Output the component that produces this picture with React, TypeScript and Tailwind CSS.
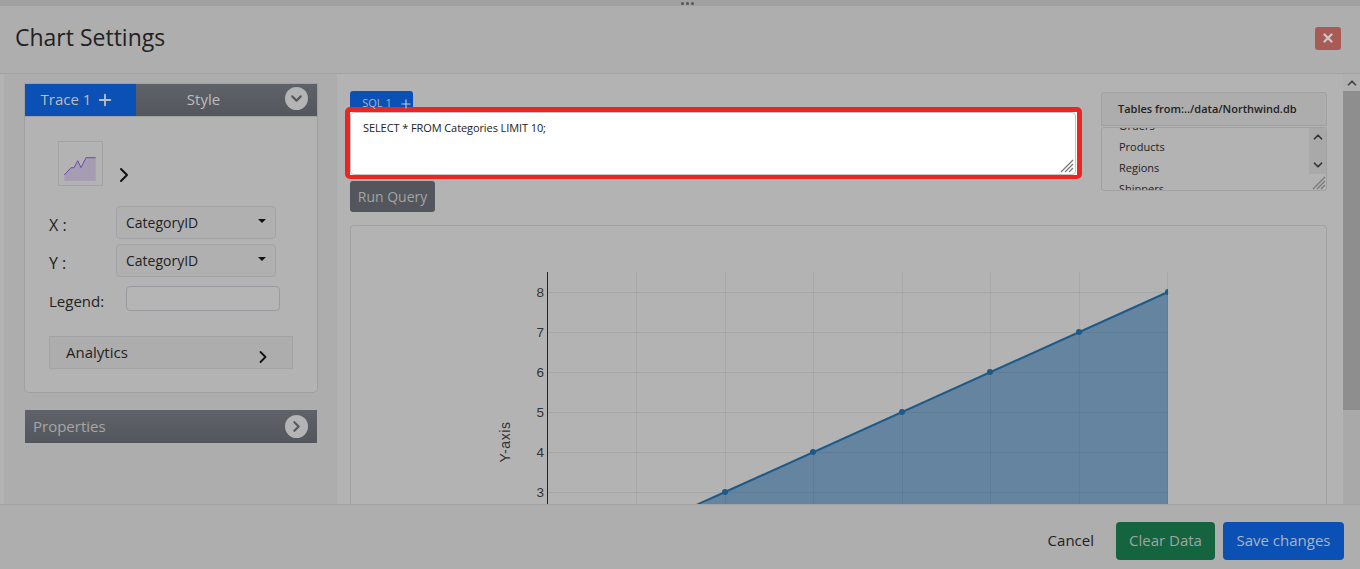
import { ChevronDown, ChevronRight, ChevronUp, Plus, X } from 'lucide-react'

const xGrid = [285, 374, 462, 551, 639, 728, 816]
const yTicks = [8, 7, 6, 5, 4, 3, 2]

function Grip() {
  return (
    <svg width="14" height="14" viewBox="0 0 14 14" className="block">
      <path d="M1 13 13 1M5 13 13 5M9 13 13 9" stroke="#777" strokeWidth="1.2" fill="none" />
    </svg>
  )
}

function RoundChevron({ down }: { down?: boolean }) {
  return (
    <span className="flex h-[23px] w-[23px] items-center justify-center rounded-full bg-[#b4b4b4] text-[#555a61]">
      {down ? <ChevronDown size={17} strokeWidth={3} /> : <ChevronRight size={17} strokeWidth={3} />}
    </span>
  )
}

function FieldSelect() {
  return (
    <div className="flex h-[33px] w-[160px] items-center justify-between rounded-[4px] border border-[#a3a3a6] bg-[#b0b0b0] pl-[9px] pr-[9px] text-[14px] text-[#222]">
      CategoryID
      <span className="mb-[3px] h-0 w-0 border-x-[4px] border-t-[4px] border-x-transparent border-t-[#111]" />
    </div>
  )
}

function Chart() {
  return (
    <svg width="975" height="300" viewBox="0 0 975 300" className="block">
      <path d="M374 266 817 66V300H308Z" fill="#65849f" />
      {xGrid.map((x) => (
        <line key={x} x1={x + 0.5} x2={x + 0.5} y1="46" y2="300" stroke="#000" strokeOpacity="0.06" />
      ))}
      {yTicks.map((t, i) => (
        <g key={t}>
          <line x1="197" x2="817" y1={66.5 + i * 40} y2={66.5 + i * 40} stroke="#000" strokeOpacity="0.06" />
          <text x="193" y={71 + i * 40} textAnchor="end" fontSize="13.5" fill="#333" fontFamily="Liberation Sans, sans-serif">
            {t}
          </text>
        </g>
      ))}
      <path d="M308 296 374 266 817 66" stroke="#1c5a8a" strokeWidth="2" fill="none" />
      {[374, 462, 551, 639, 728].map((x, i) => (
        <circle key={x} cx={x} cy={266 - i * 40} r="3" fill="#1c5a8a" />
      ))}
      <path d="M817 63a3 3 0 0 0 0 6Z" fill="#1c5a8a" />
      <line x1="196.5" x2="196.5" y1="46" y2="300" stroke="#222" />
      <text x="0" y="0" transform="translate(159 216) rotate(-90)" textAnchor="middle" fontSize="14" letterSpacing="0.6" fill="#333" fontFamily="Liberation Sans, sans-serif">
        Y-axis
      </text>
    </svg>
  )
}

export default function App() {
  return (
    <div className="flex h-[569px] w-[1360px] flex-col overflow-hidden bg-[#b3b3b3] font-['Open_Sans','Noto_Sans',sans-serif] text-[#222]">
      <div className="flex h-[6px] items-center justify-center gap-[2px] bg-[#a1a1a1] pl-[14px]">
        <span className="h-[3px] w-[3px] rounded-full bg-[#555]" />
        <span className="h-[3px] w-[3px] rounded-full bg-[#555]" />
        <span className="h-[3px] w-[3px] rounded-full bg-[#555]" />
      </div>

      <header className="flex h-[68px] shrink-0 items-center justify-between border-b border-[#a3a3a3] bg-[#aeaeae] pl-[15px] pr-[19px]">
        <h1 className="mb-[5px] text-[23px] leading-none text-[#222]">Chart Settings</h1>
        <button className="mb-[3px] flex h-[23px] w-[26px] items-center justify-center rounded-[3px] bg-[#a85a55] text-[#c9c9c9]">
          <X size={14} strokeWidth={4} />
        </button>
      </header>

      <div className="flex min-h-0 flex-1 overflow-hidden">
        <aside className="ml-[4px] w-[333px] shrink-0 bg-[#adadad] pl-[20px] pr-[19px] pt-[9px]">
          <div className="flex h-[34px] border border-[#a0a0a0] text-[15px] leading-[30px] text-[#bdbdbd]">
            <div className="flex w-[111px] items-center justify-center gap-[5px] bg-[#0b50b4] pb-[2px] pr-[6px]">
              Trace 1 <Plus size={18} strokeWidth={2.5} className="mt-[2px]" />
            </div>
            <div className="relative flex flex-1 items-center justify-center bg-gradient-to-b from-[#5f6369] to-[#53575d] pb-[2px] pr-[46px]">
              Style
              <div className="absolute right-[9px] top-[3px]">
                <RoundChevron down />
              </div>
            </div>
          </div>

          <div className="h-[276px] rounded-b-[5px] border border-t-0 border-[#a0a0a0] bg-[#b3b3b3] pl-[24px] pt-[24px]">
            <div className="flex items-end gap-[9px] pl-[9px]">
              <div className="flex h-[45px] w-[45px] items-center justify-center border border-[#a3a3a3]">
                <svg width="43" height="43" viewBox="0 0 43 43">
                  <path d="M5.3 33 12 25.7H15L18.7 18.7 22 25.7 27 15.7H36.7V39H5.3Z" fill="#a79db2" />
                  <path d="M5.3 33 12 25.7H15L18.7 18.7 22 25.7 27 15.7H36.7" stroke="#6a4bb0" strokeWidth="1" fill="none" />
                </svg>
              </div>
              <ChevronRight size={24} strokeWidth={2} className="mb-[-1px] text-[#111]" />
            </div>

            <div className="mt-[20px] flex items-center">
              <span className="mt-[4px] w-[67px] text-[16px]">X :</span>
              <FieldSelect />
            </div>
            <div className="mt-[5px] flex items-center">
              <span className="mt-[4px] w-[67px] text-[16px]">Y :</span>
              <FieldSelect />
            </div>
            <div className="mt-[9px] flex items-center">
              <span className="w-[77px] translate-y-[3px] text-[15px]">Legend:</span>
              <div className="h-[25px] w-[154px] rounded-[4px] border border-[#9a9aa0] bg-[#b5b5b5]" />
            </div>
            <div className="mt-[25px] flex h-[33px] w-[244px] items-center justify-between border border-[#a3a3a6] bg-[#adadad] pl-[16px] pr-[19px] text-[15px]">
              Analytics
              <ChevronRight size={20} strokeWidth={2.2} className="mt-[9px] text-[#111]" />
            </div>
          </div>

          <div className="mx-[1px] mt-[17px] flex h-[33px] items-center justify-between bg-gradient-to-b from-[#5f6369] to-[#53575d] pl-[8px] pr-[9px] text-[15px] text-[#a6a6a6]">
            Properties
            <RoundChevron />
          </div>
        </aside>

        <main className="flex min-w-0 flex-1 flex-col pl-[13px] pt-[17px] pr-[16px]">
          <div className="flex gap-[18px]">
            <div className="w-[733px]">
              <div className="flex h-[21px] w-[63px] items-start justify-center gap-[7px] rounded-t-[3px] bg-[#0b50b4] pl-[12px] pt-[4px] text-[11px] text-[#a9b6c6]">
                SQL 1 <Plus size={14} strokeWidth={2} className="mt-[2px] text-[#c0c8d4]" />
              </div>
              <div className="-mt-[5px] ml-[-5px] w-[737px] rounded-[5px] border-[5px] border-b-[4px] border-[#ec2520] bg-white pr-[1px]">
                <div className="relative h-[63px] rounded-[4px] border border-[#c4c4c4] pl-[12px] pt-[7px] text-[11px] tracking-[-0.09px] text-[#222]">
                  SELECT * FROM Categories LIMIT 10;
                  <div className="absolute bottom-[1px] right-[1px]">
                    <Grip />
                  </div>
                </div>
              </div>
              <button className="mt-[2px] h-[31px] w-[85px] rounded-[3px] bg-[#53575d] text-[14px] text-[#a3a3a3]">Run Query</button>
            </div>

            <div className="mt-[1px] w-[226px]">
              <div className="flex h-[34px] items-center rounded-t-[3px] border border-[#a1a1a4] bg-[#adadad] pl-[16px] text-[11px] font-semibold text-[#222]">
                Tables from:../data/Northwind.db
              </div>
              <div className="relative mt-[1px] h-[64px] overflow-hidden rounded-[3px] border border-[#a1a1a4] bg-[#b3b3b3] pl-[17px] text-[11px] leading-[21px] text-[#222]">
                <div className="-mt-[13px]">
                  <div>Orders</div>
                  <div>Products</div>
                  <div>Regions</div>
                  <div>Shippers</div>
                </div>
                <div className="absolute right-0 top-0 flex h-[46px] w-[17px] flex-col items-center justify-between bg-[#a9a9a9] py-[2px] text-[#333]">
                  <ChevronUp size={14} strokeWidth={3} />
                  <ChevronDown size={14} strokeWidth={3} />
                </div>
                <div className="absolute bottom-0 right-0">
                  <Grip />
                </div>
              </div>
            </div>
          </div>

          <div className="mt-[13px] w-[977px] flex-1 rounded-t-[4px] border border-b-0 border-[#a3a3a6]">
            <Chart />
          </div>
        </main>

        <div className="flex w-[17px] shrink-0 flex-col">
          <div className="flex h-[17px] items-center justify-center bg-[#b0b0b0] text-[#444]">
            <ChevronUp size={14} strokeWidth={3} />
          </div>
          <div className="h-[319px] bg-[#8e8e8e]" />
          <div className="flex-1 bg-[#a9a9a9]" />
        </div>
      </div>

      <footer className="flex h-[65px] shrink-0 items-center justify-end gap-[8px] border-t border-[#a3a3a3] bg-[#aeaeae] pr-[16px] pt-[7px] text-[15px]">
        <button className="mr-[8px] px-[6px] text-[#222]">Cancel</button>
        <button className="h-[38px] w-[99px] rounded-[4px] bg-[#156440] text-[#a3a3a3]">Clear Data</button>
        <button className="h-[38px] w-[121px] rounded-[4px] bg-[#0b50b4] text-[#a9b4c4]">Save changes</button>
      </footer>
    </div>
  )
}
